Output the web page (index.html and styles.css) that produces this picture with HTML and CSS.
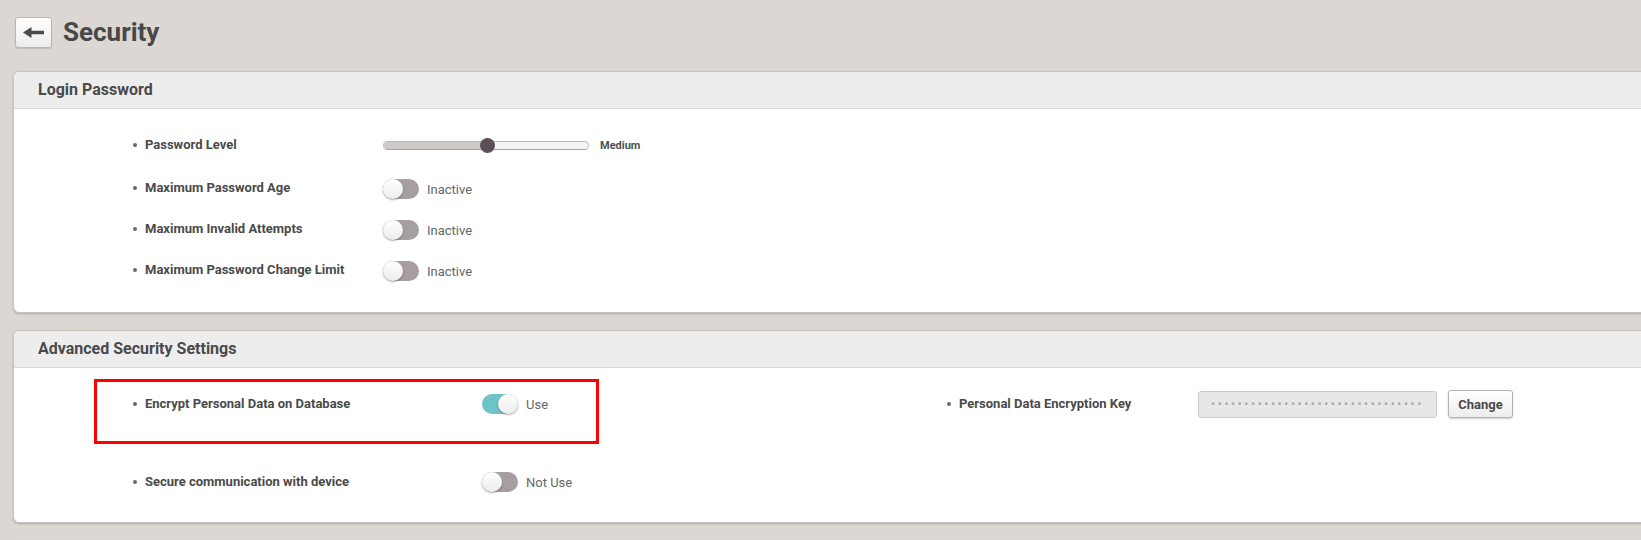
FILE: index.html
```html
<!DOCTYPE html>
<html lang="en">
<head>
<meta charset="utf-8">
<title>Security</title>
<link rel="stylesheet" href="styles.css">
</head>
<body>
<div class="page">
  <header class="titlebar">
    <button class="back" type="button" aria-label="Back">
      <svg width="21" height="11" viewBox="0 0 21 11"><path d="M0 5.5 L8.5 0 L8.5 3.8 L21 3.8 L21 7.2 L8.5 7.2 L8.5 11 Z" fill="#4a4a4a"/></svg>
    </button>
    <h1>Security</h1>
  </header>

  <section class="card">
    <div class="card-head">Login Password</div>
    <div class="card-body login">
      <div class="row slider-row">
        <div class="label">Password Level</div>
        <div class="ctrl">
          <div class="slider"><div class="fill"></div><div class="thumb"></div></div>
          <span class="level">Medium</span>
        </div>
      </div>
      <div class="row toggle-row">
        <div class="label">Maximum Password Age</div>
        <div class="ctrl"><span class="toggle"><span class="knob"></span></span><span class="state">Inactive</span></div>
      </div>
      <div class="row toggle-row">
        <div class="label">Maximum Invalid Attempts</div>
        <div class="ctrl"><span class="toggle"><span class="knob"></span></span><span class="state">Inactive</span></div>
      </div>
      <div class="row toggle-row">
        <div class="label">Maximum Password Change Limit</div>
        <div class="ctrl"><span class="toggle"><span class="knob"></span></span><span class="state">Inactive</span></div>
      </div>
    </div>
  </section>

  <section class="card">
    <div class="card-head">Advanced Security Settings</div>
    <div class="card-body adv">
      <div class="cell marked">
        <div class="label">Encrypt Personal Data on Database</div>
        <div class="ctrl"><span class="toggle on"><span class="knob"></span></span><span class="state">Use</span></div>
      </div>
      <div class="cell right">
        <div class="label">Personal Data Encryption Key</div>
        <div class="ctrl">
          <div class="keybox">••••••••••••••••••••••••••••••••</div>
          <button class="btn" type="button">Change</button>
        </div>
      </div>
      <div class="cell second">
        <div class="label">Secure communication with device</div>
        <div class="ctrl"><span class="toggle"><span class="knob"></span></span><span class="state">Not Use</span></div>
      </div>
    </div>
  </section>

  <section class="card stub">
    <div class="card-head"></div>
  </section>
</div>
</body>
</html>
```
FILE: styles.css
```css
html, body {
  margin: 0;
  padding: 0;
  height: 540px;
  overflow: hidden;
  background: #dcd7d3;
}
body {
  font-family: Roboto, "Liberation Sans", Arial, sans-serif;
  color: #4a4a4a;
}
.page {
  width: 1700px;
  padding: 17px 0 0 13px;
  box-sizing: border-box;
}
.titlebar {
  display: flex;
  align-items: center;
  gap: 11px;
  padding-left: 2px;
  height: 31px;
  margin-bottom: 23px;
}
.back {
  width: 37px;
  height: 31px;
  padding: 0;
  border: 1px solid #b9b6b4;
  border-radius: 3px;
  background: linear-gradient(#ffffff, #ececec);
  box-shadow: 0 1px 1px rgba(0,0,0,0.12);
  display: flex;
  align-items: center;
  justify-content: center;
}
.titlebar h1 {
  margin: 0;
  font-size: 26px;
  font-weight: 700;
  color: #484848;
  line-height: 31px;
}
.card {
  background: #fff;
  border: 1px solid #c6c3c1;
  border-radius: 6px;
  box-shadow: 0 1px 2px rgba(0,0,0,0.22);
  margin-bottom: 17px;
  overflow: visible;
}
.card-head {
  height: 36px;
  line-height: 36px;
  background: #ededed;
  border-bottom: 1px solid #d8d8d8;
  border-radius: 6px 6px 0 0;
  padding-left: 24px;
  font-size: 16px;
  font-weight: 700;
  color: #4a4a4a;
}
.label {
  font-size: 13px;
  font-weight: 700;
  line-height: 14px;
  color: #4a4a4a;
  display: flex;
  align-items: center;
}
.label::before {
  content: "";
  width: 4px;
  height: 4px;
  border-radius: 50%;
  background: #6a6a6a;
  margin-right: 8px;
  flex: none;
}
.ctrl {
  display: flex;
  align-items: center;
}
.card-body.login {
  padding: 23px 0 31px 119px;
  display: flex;
  flex-direction: column;
  gap: 21px;
}
.row {
  display: grid;
  grid-template-columns: 250px auto;
  align-items: center;
}
.slider-row { height: 26px; }
.toggle-row { height: 20px; }
.toggle-row .label { margin-bottom: 3px; }

.slider {
  position: relative;
  width: 206px;
  height: 9px;
  box-sizing: border-box;
  border: 1px solid #bdb8b9;
  border-bottom-color: #a9a4a5;
  border-radius: 5px;
  background: #f5f5f5;
}
.slider .fill {
  width: 104px;
  height: 100%;
  border-radius: 5px 0 0 5px;
  background: #cfc9ca;
}
.slider .thumb {
  position: absolute;
  left: 96px;
  top: -4px;
  width: 15px;
  height: 15px;
  border-radius: 50%;
  background: #5b4f55;
}
.level {
  margin-left: 11px;
  font-size: 11px;
  font-weight: 700;
  color: #4f4f4f;
}

.toggle {
  position: relative;
  display: inline-block;
  width: 36px;
  height: 20px;
  border-radius: 10px;
  background: #a69ea1;
  flex: none;
}
.toggle .knob {
  position: absolute;
  left: 0;
  top: 0;
  width: 20px;
  height: 20px;
  border-radius: 50%;
  background: linear-gradient(#ffffff, #ececec);
  box-shadow: 0 1px 2px rgba(0,0,0,0.35);
}
.toggle.on { background: #6ec3c7; }
.toggle.on .knob { left: 16px; }
.state {
  margin-left: 8px;
  font-size: 13px;
  color: #666;
}

.card-body.adv {
  padding: 22px 0 30px 119px;
  display: grid;
  grid-template-columns: 814px auto;
  grid-template-rows: 28px 20px;
  row-gap: 54px;
  align-items: center;
}
.cell {
  display: grid;
  grid-template-columns: 349px auto;
  align-items: center;
}
.cell.right {
  grid-template-columns: 251px auto;
}
.cell.second {
  grid-column: 1;
}
.marked {
  position: relative;
}
.marked::after {
  content: "";
  position: absolute;
  left: -39px;
  top: -15px;
  width: 505px;
  height: 65px;
  box-sizing: border-box;
  border: 3px solid #ff0000;
}
.keybox {
  width: 239px;
  height: 27px;
  box-sizing: border-box;
  border: 1px solid #cbcbcb;
  border-radius: 3px;
  background: #e7e7e7;
  color: #a8a8a8;
  font-size: 12px;
  letter-spacing: 2.6px;
  line-height: 25px;
  text-align: center;
  overflow: hidden;
  white-space: nowrap;
}
.btn {
  margin-left: 11px;
  height: 28px;
  width: 65px;
  padding: 0;
  border: 1px solid #b4b1b1;
  border-radius: 3px;
  background: linear-gradient(#ffffff, #ededed);
  box-shadow: 0 1px 2px rgba(0,0,0,0.2);
  font-family: Roboto, "Liberation Sans", Arial, sans-serif;
  font-size: 13px;
  font-weight: 700;
  color: #4a4a4a;
}
.card.stub {
  height: 60px;
}
```
